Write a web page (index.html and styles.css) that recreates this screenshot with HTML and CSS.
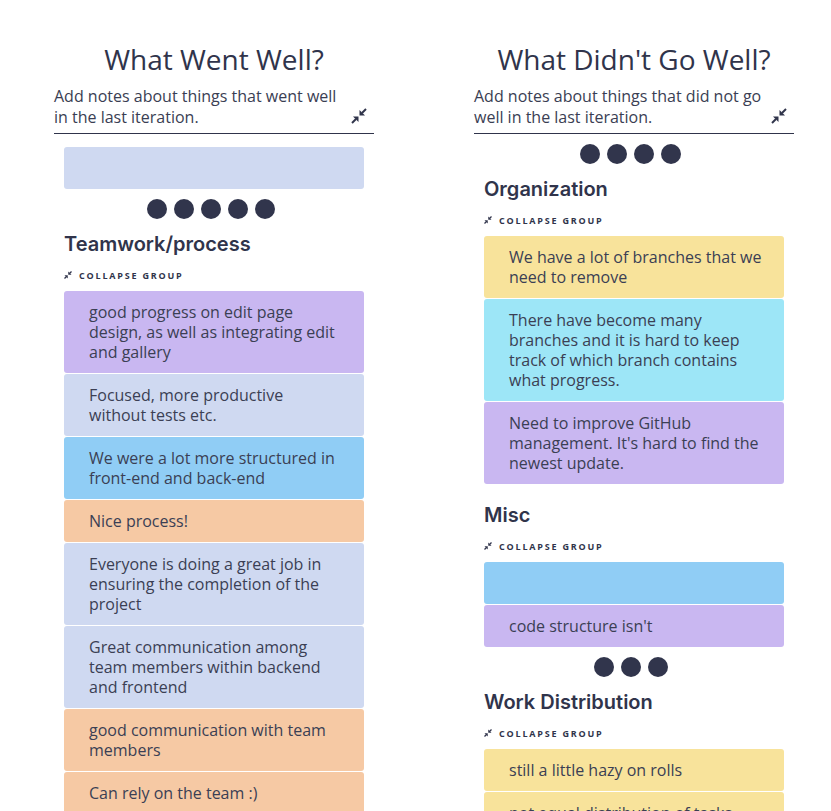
FILE: index.html
```html
<!DOCTYPE html>
<html lang="en">
<head>
<meta charset="utf-8">
<title>Retrospective</title>
<link rel="stylesheet" href="styles.css">
</head>
<body>
<main class="board">
  <section class="column">
    <header class="col-header">
      <h1 class="col-title">What Went Well?</h1>
      <div class="col-desc-row">
        <p class="col-desc">Add notes about things that went well in the last iteration.</p>
        <svg class="compress-icon" viewBox="0 0 16 16" aria-hidden="true">
          <polygon points="8.5,2 8.5,7.5 14,7.5"/>
          <line x1="11" y1="5" x2="15" y2="1"/>
          <polygon points="2,8.5 7.5,8.5 7.5,14"/>
          <line x1="5" y1="11" x2="1" y2="15"/>
        </svg>
      </div>
    </header>
    <div class="col-body">
      <div class="card card-slate card-empty first-card"></div>
      <div class="dots"><span></span><span></span><span></span><span></span><span></span></div>
      <div class="group">
        <h2 class="group-title">Teamwork/process</h2>
        <div class="collapse-row">
          <svg class="collapse-icon" viewBox="0 0 16 16" aria-hidden="true">
            <polygon points="8.5,1 8.5,7.5 15,7.5"/>
            <line x1="11" y1="5" x2="15" y2="1"/>
            <polygon points="1,8.5 7.5,8.5 7.5,15"/>
            <line x1="5" y1="11" x2="1" y2="15"/>
          </svg>
          <span>COLLAPSE GROUP</span>
        </div>
        <div class="card card-purple">good progress on edit page design, as well as integrating edit and gallery</div>
        <div class="card card-slate">Focused, more productive without tests etc.</div>
        <div class="card card-blue">We were a lot more structured in front-end and back-end</div>
        <div class="card card-peach">Nice process!</div>
        <div class="card card-slate">Everyone is doing a great job in ensuring the completion of the project</div>
        <div class="card card-slate">Great communication among team members within backend and frontend</div>
        <div class="card card-peach">good communication with team members</div>
        <div class="card card-peach">Can rely on the team :)</div>
        <div class="card card-slate">Good teamwork overall</div>
      </div>
    </div>
  </section>

  <section class="column">
    <header class="col-header">
      <h1 class="col-title">What Didn't Go Well?</h1>
      <div class="col-desc-row">
        <p class="col-desc">Add notes about things that did not go well in the last iteration.</p>
        <svg class="compress-icon" viewBox="0 0 16 16" aria-hidden="true">
          <polygon points="8.5,2 8.5,7.5 14,7.5"/>
          <line x1="11" y1="5" x2="15" y2="1"/>
          <polygon points="2,8.5 7.5,8.5 7.5,14"/>
          <line x1="5" y1="11" x2="1" y2="15"/>
        </svg>
      </div>
    </header>
    <div class="col-body">
      <div class="dots"><span></span><span></span><span></span><span></span></div>
      <div class="group">
        <h2 class="group-title">Organization</h2>
        <div class="collapse-row">
          <svg class="collapse-icon" viewBox="0 0 16 16" aria-hidden="true">
            <polygon points="8.5,1 8.5,7.5 15,7.5"/>
            <line x1="11" y1="5" x2="15" y2="1"/>
            <polygon points="1,8.5 7.5,8.5 7.5,15"/>
            <line x1="5" y1="11" x2="1" y2="15"/>
          </svg>
          <span>COLLAPSE GROUP</span>
        </div>
        <div class="card card-yellow">We have a lot of branches that we need to remove</div>
        <div class="card card-cyan">There have become many branches and it is hard to keep track of which branch contains what progress.</div>
        <div class="card card-purple">Need to improve GitHub management. It's hard to find the newest update.</div>
      </div>
      <div class="group group-next">
        <h2 class="group-title">Misc</h2>
        <div class="collapse-row">
          <svg class="collapse-icon" viewBox="0 0 16 16" aria-hidden="true">
            <polygon points="8.5,1 8.5,7.5 15,7.5"/>
            <line x1="11" y1="5" x2="15" y2="1"/>
            <polygon points="1,8.5 7.5,8.5 7.5,15"/>
            <line x1="5" y1="11" x2="1" y2="15"/>
          </svg>
          <span>COLLAPSE GROUP</span>
        </div>
        <div class="card card-blue card-empty"></div>
        <div class="card card-purple">code structure isn't</div>
      </div>
      <div class="dots"><span></span><span></span><span></span></div>
      <div class="group">
        <h2 class="group-title">Work Distribution</h2>
        <div class="collapse-row">
          <svg class="collapse-icon" viewBox="0 0 16 16" aria-hidden="true">
            <polygon points="8.5,1 8.5,7.5 15,7.5"/>
            <line x1="11" y1="5" x2="15" y2="1"/>
            <polygon points="1,8.5 7.5,8.5 7.5,15"/>
            <line x1="5" y1="11" x2="1" y2="15"/>
          </svg>
          <span>COLLAPSE GROUP</span>
        </div>
        <div class="card card-yellow">still a little hazy on rolls</div>
        <div class="card card-yellow">not equal distribution of tasks</div>
      </div>
    </div>
  </section>
</main>
</body>
</html>
```

FILE: styles.css
```css
html, body {
  margin: 0;
  padding: 0;
  overflow: hidden;
  background: #ffffff;
}

body {
  font-family: "Open Sans", "Liberation Sans", sans-serif;
  color: #30344b;
}

.board {
  display: flex;
  align-items: flex-start;
  gap: 100px;
  padding: 40px 0 0 54px;
}

.column {
  width: 320px;
  flex: none;
}

.col-header {
  border-bottom: 1px solid #30344b;
  padding-bottom: 5px;
}

.col-title {
  margin: 0;
  font-weight: 400;
  font-size: 28px;
  line-height: 38px;
  text-align: center;
  color: #30344b;
}

.col-desc-row {
  display: flex;
  align-items: flex-end;
  margin-top: 8px;
}

.col-desc {
  flex: 1;
  margin: 0;
  font-size: 16px;
  line-height: 21px;
  color: #3a3e53;
  padding-right: 4px;
}

.compress-icon {
  width: 16px;
  height: 16px;
  margin: 0 7px 4px 0;
  flex: none;
}

.compress-icon polygon,
.collapse-icon polygon {
  fill: #30344b;
}

.compress-icon line {
  stroke: #30344b;
  stroke-width: 2;
}

.collapse-icon line {
  stroke: #30344b;
  stroke-width: 2.6;
}

.col-body {
  padding: 0 10px;
}

.first-card {
  margin-top: 13px;
}

.card {
  border-radius: 3px;
  padding: 11px 20px 11px 25px;
  margin-bottom: 1px;
  font-size: 16px;
  line-height: 20px;
  color: #3b3f54;
}

.card-empty {
  height: 20px;
}

.card-slate { background: #cfd9f1; }
.card-purple { background: #c9b7f1; }
.card-blue { background: #90cdf5; }
.card-peach { background: #f6c9a4; }
.card-yellow { background: #f8e39b; }
.card-cyan { background: #9de6f7; }

.dots {
  display: flex;
  justify-content: center;
  margin-top: 10px;
}

.dots span {
  width: 20px;
  height: 20px;
  border-radius: 50%;
  background: #31354c;
  margin-right: 7px;
}

.group-title {
  margin: 13px 0 0;
  font-family: Inter, "Liberation Sans", sans-serif;
  font-weight: 600;
  font-size: 20px;
  line-height: 24px;
  color: #30344b;
}

.group-next {
  padding-top: 5px;
}

.collapse-row {
  display: flex;
  align-items: center;
  gap: 7px;
  margin: 12px 0 9px;
  height: 14px;
  font-size: 9px;
  font-weight: 700;
  letter-spacing: 1.8px;
  color: #30344b;
}

.collapse-icon {
  width: 8px;
  height: 8px;
  flex: none;
}
```
